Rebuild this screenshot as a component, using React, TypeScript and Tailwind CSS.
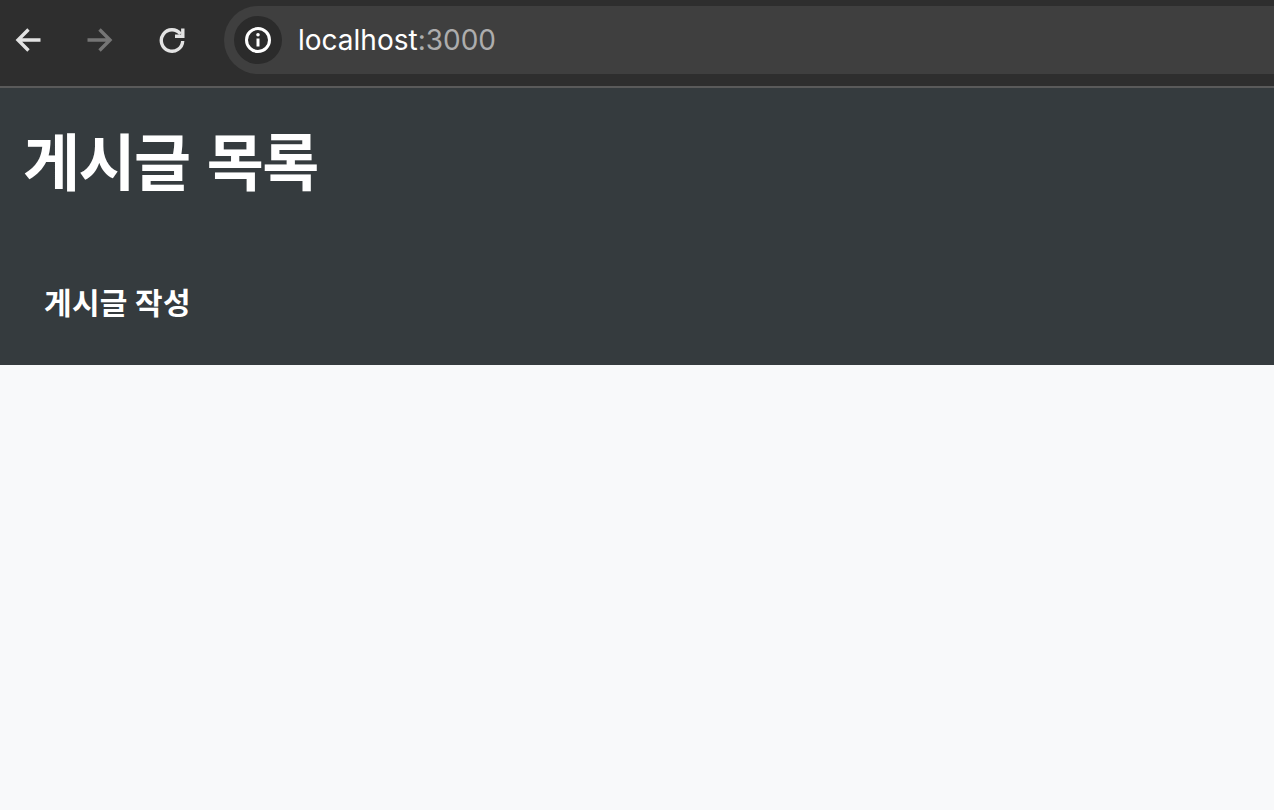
export default function App() {
  const cjk = "font-['Inter','Noto_Sans_CJK_KR',sans-serif]";
  return (
    <div className={`flex h-[810px] flex-col overflow-hidden bg-[#f8f9fa] ${cjk}`}>
      <div className="flex h-[88px] shrink-0 items-start border-b-2 border-[#5a5a5a] bg-[#2e2e2e] pt-[6px]">
        <div className="flex h-[68px] w-[224px] shrink-0 items-center">
          <svg className="ml-[15px]" width="26" height="26" viewBox="0 0 26 26" fill="none" stroke="#e3e3e3" strokeWidth="3.400">
            <path d="M25.500 13H4M13.500 2.500L3 13L13.500 23.500" />
          </svg>
          <svg className="ml-[46px]" width="26" height="26" viewBox="0 0 26 26" fill="none" stroke="#757575" strokeWidth="3.400">
            <path d="M0.500 13H22M12.500 2.500L23 13L12.500 23.500" />
          </svg>
          <svg className="ml-[46px]" width="26" height="26" viewBox="0 0 26 26" fill="none" stroke="#e3e3e3" strokeWidth="3.400">
            <path d="M21.500 7A10.700 10.700 0 1 0 23.700 14" />
            <path d="M23.800 1.500V9.300H16" />
          </svg>
        </div>
        <div className="flex h-[68px] flex-1 items-center rounded-l-[34px] bg-[#3f3f3f] pl-[10px]">
          <div className="flex h-[48px] w-[48px] items-center justify-center rounded-full bg-[#2b2b2b]">
            <svg width="28" height="28" viewBox="0 0 28 28" fill="none">
              <circle cx="14" cy="14" r="11.500" stroke="white" strokeWidth="3" />
              <path d="M14 12.500V20.500" stroke="white" strokeWidth="3" />
              <circle cx="14" cy="8.800" r="1.800" fill="white" />
            </svg>
          </div>
          <div className="ml-[16px] text-[28px] leading-[34px] text-white">
            localhost<span className="text-[#adadad]">:3000</span>
          </div>
        </div>
      </div>
      <div className="h-[277px] shrink-0 bg-[#353b3e] text-white">
        <h1 className="pl-[23px] pt-[37px] text-[62px] leading-[77px] font-bold tracking-[-1.5px] [word-spacing:4px]">게시글 목록</h1>
        <div className="pl-[44px] pt-[83px] text-[30px] leading-[36px] font-bold tracking-[0.3px]">게시글 작성</div>
      </div>
      <div className="flex-1" />
    </div>
  );
}
